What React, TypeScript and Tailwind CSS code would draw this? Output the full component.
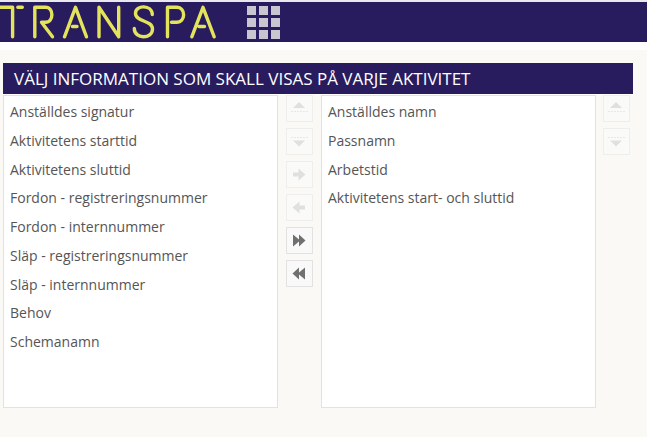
import { useState } from "react";
import type { ReactNode } from "react";

const available = [
  "Anställdes signatur",
  "Aktivitetens starttid",
  "Aktivitetens sluttid",
  "Fordon - registreringsnummer",
  "Fordon - internnummer",
  "Släp - registreringsnummer",
  "Släp - internnummer",
  "Behov",
  "Schemanamn",
];

const chosen = [
  "Anställdes namn",
  "Passnamn",
  "Arbetstid",
  "Aktivitetens start- och sluttid",
];

function Logo() {
  return (
    <svg
      width="220"
      height="40"
      viewBox="0 2 220 40"
      fill="none"
      stroke="#e3e35c"
      strokeWidth="3.4"
      strokeLinecap="round"
      strokeLinejoin="round"
      role="img"
      aria-label="Transpa"
    >
      <path d="M-2 7.3H12.6V36.8M17.8 7.3H22.3" />
      <path d="M34.8 36.8V7.3H45.5C54 7.3 54 22.3 45.5 22.3H41.5L52.5 36.8" />
      <path d="M64.5 36.8L75.5 7.3L86.5 36.8M72.5 26.5H77" />
      <path d="M99 36.8V7.3L118.7 36.8V7.3" />
      <path d="M152.3 14.5C152 4.5 135.5 4.5 135.5 13.5C135.5 22 152.5 20 152.5 29C152.5 39.5 134.3 39.5 134.3 28.5" />
      <path d="M167.5 36.8V7.3H176.5C186 7.3 186 22.3 176.5 22.3H171.5" />
      <path d="M191.8 36.8L203 7.3L214.2 36.8M199 26.5H204.5" />
    </svg>
  );
}

function AppsButton() {
  return (
    <button type="button" aria-label="Meny" className="grid grid-cols-3 gap-[3px]">
      {Array.from({ length: 9 }, (_, i) => (
        <span key={i} className="size-[9px] bg-[#c9c6d2]" />
      ))}
    </button>
  );
}

const icons: Record<string, ReactNode> = {
  up: (
    <>
      <path d="M6 8L12 2L18 8Z" />
      <path d="M4 11.5H21" fill="none" stroke="currentColor" strokeDasharray="2 1" opacity="0.7" />
    </>
  ),
  down: (
    <>
      <path d="M4 4.5H21" fill="none" stroke="currentColor" strokeDasharray="2 1" opacity="0.7" />
      <path d="M6 7.5H18L12 13.5Z" />
    </>
  ),
  right: <path d="M6 6.5H11.5V2.5L18.5 8.5L11.5 14.500V10.500H6Z" />,
  left: <path d="M18 6.500H12.500V2.500L5.500 8.500L12.500 14.500V10.500H18Z" />,
  allRight: <path d="M6 2.500L12 7.500V2.500L18.500 8.500L12 14.500V9.500L6 14.500Z" />,
  allLeft: <path d="M18 2.500L12 7.500V2.500L5.500 8.500L12 14.500V9.500L18 14.500Z" />,
};

function ToolButton({ icon, label, disabled }: { icon: string; label: string; disabled?: boolean }) {
  return (
    <button
      type="button"
      aria-label={label}
      disabled={disabled}
      className="flex size-[27px] items-center justify-center border border-[#e2e2e2] bg-[#f9f9f9] text-[#707070] disabled:border-[#efeeec] disabled:bg-[#fafaf8] disabled:text-[#e0e0de]"
    >
      <svg width="25" height="17" viewBox="0 0 25 17" fill="currentColor" aria-hidden="true">
        {icons[icon]}
      </svg>
    </button>
  );
}

function ListBox({ items, label }: { items: string[]; label: string }) {
  const [selected, setSelected] = useState<string | null>(null);

  return (
    <ul
      role="listbox"
      aria-label={label}
      className="grid h-[313px] min-w-0 flex-1 grid-rows-9 border border-[#e2e2e2] bg-white pt-0.5 pb-[50px] text-sm leading-7 text-[#555]"
    >
      {items.map((item) => (
        <li
          key={item}
          role="option"
          aria-selected={selected === item}
          onClick={() => setSelected(item)}
          className="cursor-default truncate px-1.5 aria-selected:bg-gray-100"
        >
          {item}
        </li>
      ))}
    </ul>
  );
}

export default function App() {
  return (
    <div className="min-h-screen bg-[#faf9f5] font-['Open_Sans','Noto_Sans',sans-serif]">
      <header className="border-t-2 border-b-8 border-t-[#e9e9ed] border-b-white bg-[#281c5e]">
        <div className="flex h-10 items-center gap-[27px]">
          <Logo />
          <AppsButton />
        </div>
      </header>

      <main className="pt-[13px] pr-3.5 pl-[3px]">
        <h1 className="bg-[#281c5e] px-[11px] text-[17px] leading-[31px] text-white">
          VÄLJ INFORMATION SOM SKALL VISAS PÅ VARJE AKTIVITET
        </h1>

        <div className="flex border-t border-white pr-[3px]">
          <ListBox items={available} label="Tillgänglig information" />
          <div className="mx-2 flex flex-col gap-1.5">
            <ToolButton icon="up" label="Flytta upp" disabled />
            <ToolButton icon="down" label="Flytta ner" disabled />
            <ToolButton icon="right" label="Lägg till" disabled />
            <ToolButton icon="left" label="Ta bort" disabled />
            <ToolButton icon="allRight" label="Lägg till alla" />
            <ToolButton icon="allLeft" label="Ta bort alla" />
          </div>
          <ListBox items={chosen} label="Vald information" />
          <div className="ml-[7px] flex flex-col gap-1.5">
            <ToolButton icon="up" label="Flytta vald upp" disabled />
            <ToolButton icon="down" label="Flytta vald ner" disabled />
          </div>
        </div>
      </main>
    </div>
  );
}
